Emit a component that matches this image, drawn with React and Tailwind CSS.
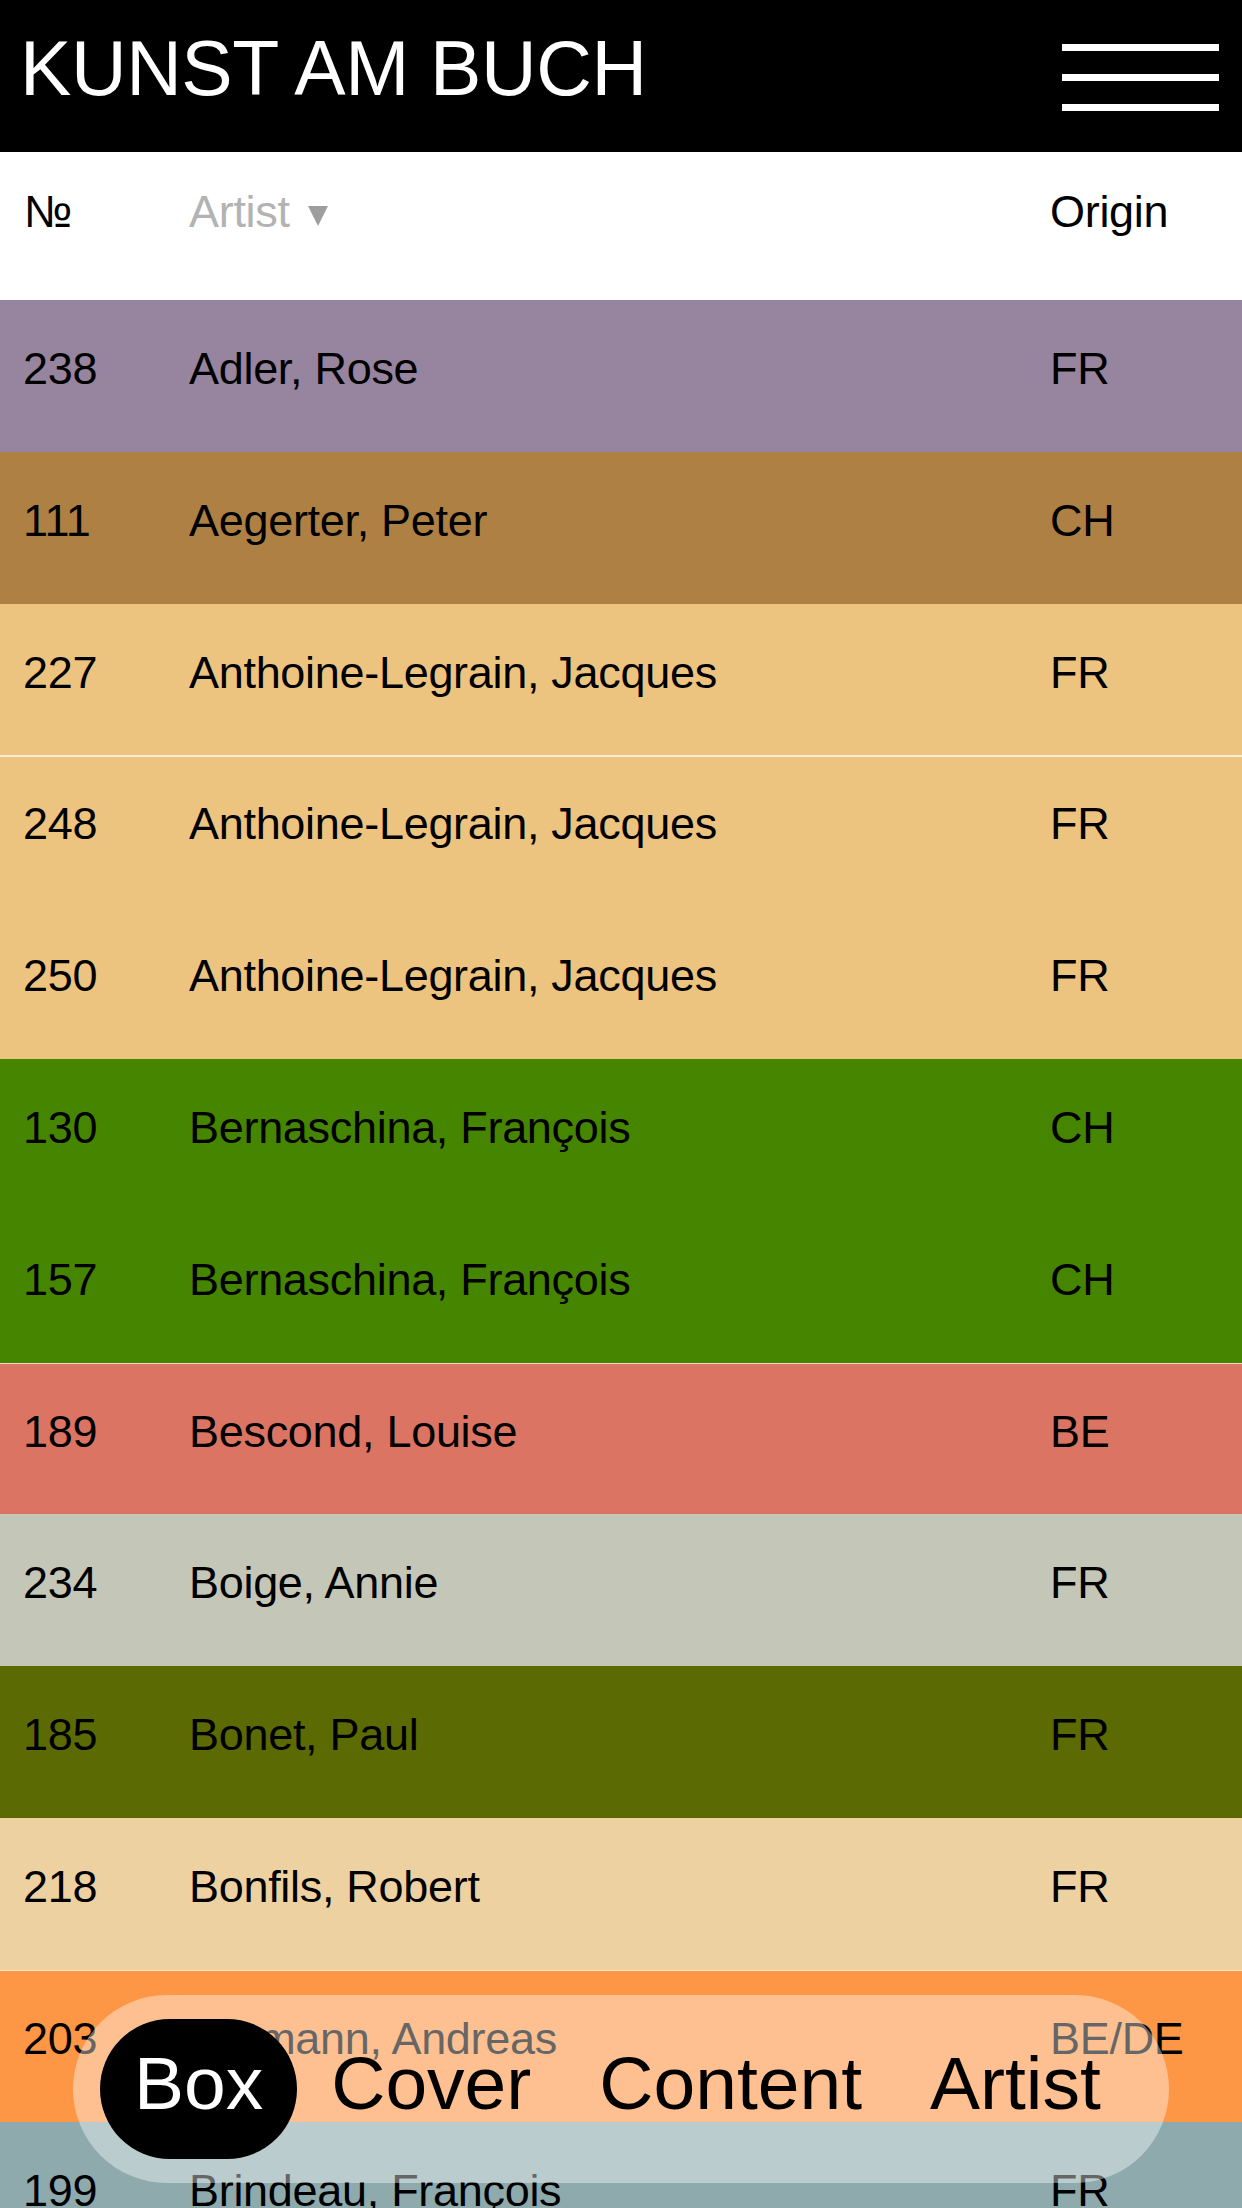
import React from "react";

const rows = [
  { no: "238", artist: "Adler, Rose", origin: "FR", color: "bg-[#97849f]" },
  { no: "111", artist: "Aegerter, Peter", origin: "CH", color: "bg-[#ae8043]" },
  { no: "227", artist: "Anthoine-Legrain, Jacques", origin: "FR", color: "bg-[#edc47f]" },
  { no: "248", artist: "Anthoine-Legrain, Jacques", origin: "FR", color: "bg-[#edc47f]", line: true },
  { no: "250", artist: "Anthoine-Legrain, Jacques", origin: "FR", color: "bg-[#edc47f]" },
  { no: "130", artist: "Bernaschina, François", origin: "CH", color: "bg-[#468500]" },
  { no: "157", artist: "Bernaschina, François", origin: "CH", color: "bg-[#468500]" },
  { no: "189", artist: "Bescond, Louise", origin: "BE", color: "bg-[#dc7464]", line: true },
  { no: "234", artist: "Boige, Annie", origin: "FR", color: "bg-[#c4c6b8]" },
  { no: "185", artist: "Bonet, Paul", origin: "FR", color: "bg-[#5b6a03]" },
  { no: "218", artist: "Bonfils, Robert", origin: "FR", color: "bg-[#edd1a0]" },
  { no: "203", artist: "Bormann, Andreas", origin: "BE/DE", color: "bg-[#fd9746]", line: true },
  { no: "199", artist: "Brindeau, François", origin: "FR", color: "bg-[#8eaaad]" },
  { no: "219", artist: "Brockhaus, Irmgard", origin: "DE", color: "bg-[#d9b98c]" },
];

const Row = ({ no, artist, origin, color, line }) => (
  <div className={`relative flex h-[151.8px] pl-[23px] pr-[22px] pt-[43px] text-[45px] leading-[52px] tracking-[-0.3px] text-black ${color}`}>
    {line && <div className="absolute left-0 right-0 top-0 h-[1.5px] bg-white/70" />}
    <span className="w-[166px]">{no}</span>
    <span className="flex-1">{artist}</span>
    <span className="w-[170px]">{origin}</span>
  </div>
);

const NavItem = ({ label, active }) => (
  <button
    className={`flex h-[140px] items-center rounded-full px-[34px] pb-3 text-[75px] leading-none ${
      active ? "bg-black text-white" : "text-black"
    }`}
  >
    {label}
  </button>
);

const App = () => {
  return (
    <div className="relative h-screen w-full overflow-hidden bg-white font-['Liberation_Sans',Arial,sans-serif]">
      {/* Top bar */}
      <header className="flex h-[152px] items-start justify-between bg-black pl-5 pr-[23px]">
        <h1 className="pt-[30px] text-[77px] leading-none tracking-[-0.4px] text-white">KUNST AM BUCH</h1>
        <button className="mt-[44px] flex w-[157px] flex-col gap-[23px]">
          <span className="h-[7px] w-full bg-white" />
          <span className="h-[7px] w-full bg-white" />
          <span className="h-[7px] w-full bg-white" />
        </button>
      </header>

      {/* Column heads */}
      <div className="flex h-[148px] items-start pl-[23px] pr-[22px] pt-[34px] text-[45px] leading-[52px] tracking-[-0.3px]">
        <span className="w-[166px] pl-[1px] text-black">№</span>
        <span className="flex flex-1 items-center text-[#b3b3b3]">
          Artist
          <svg className="ml-[18px] mt-[6px]" width="20" height="21" viewBox="0 0 20 21">
            <polygon points="0,1 20,1 10,21" fill="#9e9e9e" />
          </svg>
        </span>
        <span className="w-[170px] text-black">Origin</span>
      </div>

      {/* Rows */}
      <div>
        {rows.map((r) => (
          <Row key={r.no} {...r} />
        ))}
      </div>

      {/* Bottom nav */}
      <nav className="absolute bottom-[25px] left-[73px] flex h-[188px] w-[1096px] items-center rounded-full bg-white/40 px-[27px]">
        <NavItem label="Box" active />
        <NavItem label="Cover" />
        <NavItem label="Content" />
        <NavItem label="Artist" />
      </nav>
    </div>
  );
};

export default App;
